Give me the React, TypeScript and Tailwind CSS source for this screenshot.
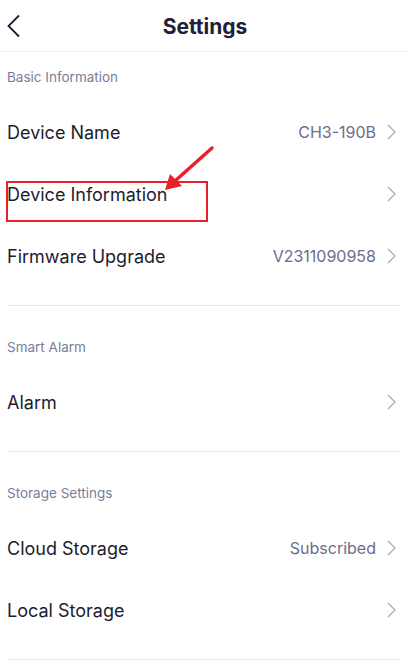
type Row = { label: string; value?: string };
type Section = { title: string; rows: Row[] };

const sections: Section[] = [
  {
    title: "Basic Information",
    rows: [
      { label: "Device Name", value: "CH3-190B" },
      { label: "Device Information" },
      { label: "Firmware Upgrade", value: "V2311090958" },
    ],
  },
  { title: "Smart Alarm", rows: [{ label: "Alarm" }] },
  {
    title: "Storage Settings",
    rows: [{ label: "Cloud Storage", value: "Subscribed" }, { label: "Local Storage" }],
  },
];

function Chevron() {
  return (
    <svg width="9" height="16" viewBox="0 0 9 16" fill="none">
      <path d="M1 1 L8 8 L1 15" stroke="#a7a8ba" strokeWidth="1.2" />
    </svg>
  );
}

function SettingRow({ row }: { row: Row }) {
  return (
    <div className="flex h-[62px] items-center justify-between pr-[5px]">
      <span className="text-[18px] text-[#1c1d2e]">{row.label}</span>
      <div className="flex items-center gap-[11px]">
        {row.value && <span className="text-[16px] text-[#6c6d8c]">{row.value}</span>}
        <Chevron />
      </div>
    </div>
  );
}

export default function App() {
  return (
    <div className="relative h-[665px] w-[410px] overflow-hidden bg-white font-['Inter',sans-serif]">
      <header className="relative flex h-[52px] items-center justify-center border-b border-[#f3f3f6] pt-[3px]">
        <svg
          className="absolute left-[6px] top-[14px]"
          width="16"
          height="24"
          viewBox="0 0 16 24"
          fill="none"
        >
          <path d="M13 1.5 L2.5 12 L13 22.5" stroke="#1c1d2e" strokeWidth="1.8" />
        </svg>
        <h1 className="text-[21px] font-bold text-[#1e2138]">Settings</h1>
      </header>

      <main className="pl-[7px] pr-[9px]">
        {sections.map((section, i) => (
          <section
            key={section.title}
            className={`border-b border-[#e7e7ec] pb-[18px] ${i === 0 ? "pt-[16px]" : "pt-[32px]"}`}
          >
            <p className="mb-[15px] h-[18px] text-[13.5px] leading-[18px] text-[#7b7d98]">
              {section.title}
            </p>
            {section.rows.map((row) => (
              <SettingRow key={row.label} row={row} />
            ))}
          </section>
        ))}
      </main>

      {/* annotation overlay */}
      <div className="absolute left-[6px] top-[181px] h-[41px] w-[202px] border-[2.5px] border-[#e8202a]" />
      <svg className="absolute left-0 top-0" width="410" height="665" fill="none">
        <line x1="212" y1="148" x2="175" y2="181" stroke="#e8202a" strokeWidth="3.5" strokeLinecap="round" />
        <polygon points="165,190 170,174 182,186" fill="#e8202a" />
      </svg>
    </div>
  );
}
